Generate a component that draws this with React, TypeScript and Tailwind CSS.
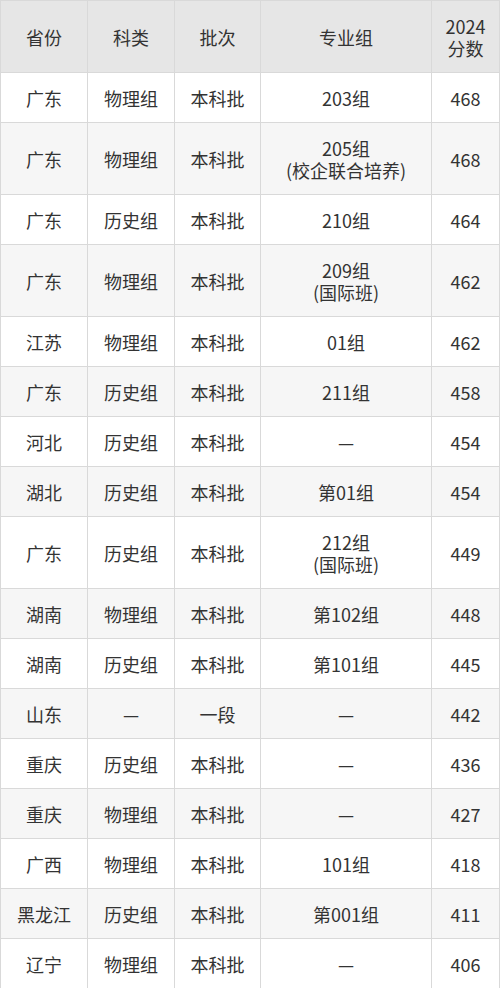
const rows: [string, string, string, string[], string][] = [
  ["广东", "物理组", "本科批", ["203组"], "468"],
  ["广东", "物理组", "本科批", ["205组", "(校企联合培养)"], "468"],
  ["广东", "历史组", "本科批", ["210组"], "464"],
  ["广东", "物理组", "本科批", ["209组", "(国际班)"], "462"],
  ["江苏", "物理组", "本科批", ["01组"], "462"],
  ["广东", "历史组", "本科批", ["211组"], "458"],
  ["河北", "历史组", "本科批", ["—"], "454"],
  ["湖北", "历史组", "本科批", ["第01组"], "454"],
  ["广东", "历史组", "本科批", ["212组", "(国际班)"], "449"],
  ["湖南", "物理组", "本科批", ["第102组"], "448"],
  ["湖南", "历史组", "本科批", ["第101组"], "445"],
  ["山东", "—", "一段", ["—"], "442"],
  ["重庆", "历史组", "本科批", ["—"], "436"],
  ["重庆", "物理组", "本科批", ["—"], "427"],
  ["广西", "物理组", "本科批", ["101组"], "418"],
  ["黑龙江", "历史组", "本科批", ["第001组"], "411"],
  ["辽宁", "物理组", "本科批", ["—"], "406"],
]

const cell = "border border-[#d9d9d9] text-center align-middle p-0"

export default function App() {
  return (
    <div className="w-[500px] bg-white font-['Noto_Sans_CJK_SC','Noto_Sans',sans-serif] text-[18px] leading-[22px] text-[#333]">
      <table className="w-[499px] table-fixed border-collapse">
        <colgroup>
          <col className="w-[87px]" />
          <col className="w-[87px]" />
          <col className="w-[86px]" />
          <col className="w-[171px]" />
          <col className="w-[68px]" />
        </colgroup>
        <thead>
          <tr className="h-[72px] bg-[#e6e6e6]">
            <th className={`${cell} font-normal`}>省份</th>
            <th className={`${cell} font-normal`}>科类</th>
            <th className={`${cell} font-normal`}>批次</th>
            <th className={`${cell} font-normal`}>专业组</th>
            <th className={`${cell} font-normal`}>
              2024
              <br />
              分数
            </th>
          </tr>
        </thead>
        <tbody>
          {rows.map((r, i) => (
            <tr
              key={i}
              className={`${r[3].length > 1 ? "h-[72px]" : "h-[50px]"} ${i % 2 === 1 ? "bg-[#f6f6f6]" : "bg-white"}`}
            >
              <td className={cell}>{r[0]}</td>
              <td className={cell}>{r[1]}</td>
              <td className={cell}>{r[2]}</td>
              <td className={cell}>
                {r[3].map((line, j) => (
                  <div key={j}>{line}</div>
                ))}
              </td>
              <td className={cell}>{r[4]}</td>
            </tr>
          ))}
        </tbody>
      </table>
    </div>
  )
}
